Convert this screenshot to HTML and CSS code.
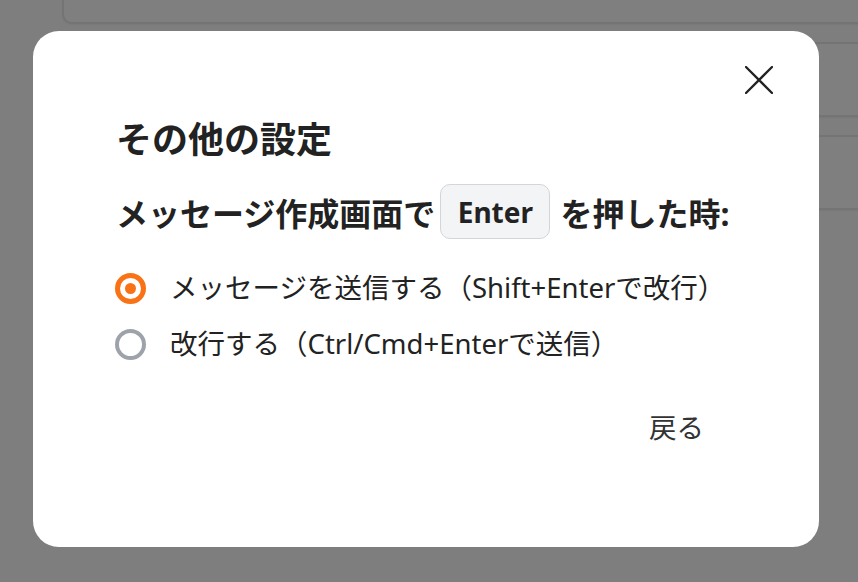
FILE: index.html
```html
<!DOCTYPE html>
<html lang="ja">
<head>
<meta charset="utf-8">
<title>その他の設定</title>
<link rel="stylesheet" href="styles.css">
</head>
<body>
<div class="page">
  <div class="card card-first"><span class="card-text">通知の設定</span></div>
  <div class="card"></div>
  <div class="card"></div>
</div>

<div class="overlay">
  <div class="modal" role="dialog" aria-labelledby="modal-title">
    <div class="modal-header">
      <button class="close-btn" aria-label="閉じる">
        <svg width="28" height="28" viewBox="0 0 28 28" aria-hidden="true">
          <path d="M1 1 L27 27 M27 1 L1 27" stroke="#222" stroke-width="2.3" stroke-linecap="round" fill="none"/>
        </svg>
      </button>
    </div>
    <h2 class="modal-title" id="modal-title">その他の設定</h2>
    <div class="question">
      <span>メッセージ作成画面で</span>
      <kbd class="key">Enter</kbd>
      <span>を押した時:</span>
    </div>
    <div class="options">
      <label class="option">
        <span class="radio radio-checked"><span class="radio-dot"></span></span>
        <span class="option-text">メッセージを送信する（Shift+Enterで改行）</span>
      </label>
      <label class="option">
        <span class="radio"></span>
        <span class="option-text">改行する（Ctrl/Cmd+Enterで送信）</span>
      </label>
    </div>
    <div class="modal-footer">
      <button class="back-btn">戻る</button>
    </div>
  </div>
</div>
</body>
</html>
```

FILE: styles.css
```css
* {
  box-sizing: border-box;
}

html, body {
  margin: 0;
  padding: 0;
  width: 858px;
  height: 582px;
  overflow: hidden;
}

body {
  background: #fdfdfd;
  font-family: "Noto Sans", "Noto Sans CJK JP", sans-serif;
  color: #222;
}

.page {
  display: flex;
  flex-direction: column;
  gap: 18px;
  padding-left: 62px;
  margin-top: -50px;
  width: 1100px;
}

.card {
  height: 75px;
  background: #ffffff;
  border: 2px solid #e8e8e8;
  border-radius: 10px;
  box-shadow: 0 1px 2px rgba(0,0,0,0.06);
}

.card-first {
  height: 74px;
  padding: 0 0 0 36px;
  display: flex;
  align-items: flex-start;
}

.card-text {
  font-size: 24px;
  line-height: 52px;
  color: #222;
}

.overlay {
  position: fixed;
  inset: 0;
  background: rgba(0, 0, 0, 0.5);
  display: flex;
  align-items: flex-start;
  padding: 31px 0 0 33px;
}

.modal {
  width: 786px;
  height: 516px;
  background: #ffffff;
  border-radius: 26px;
  padding: 35px 46px 0 83px;
  display: flex;
  flex-direction: column;
}

.modal-header {
  display: flex;
  justify-content: flex-end;
  height: 28px;
}

.close-btn {
  width: 28px;
  height: 28px;
  padding: 0;
  margin: 0;
  border: none;
  background: none;
  display: flex;
}

.modal-title {
  margin: 24px 0 0 0;
  font-size: 36px;
  line-height: 44px;
  font-weight: 700;
  color: #222;
}

.question {
  margin-top: 22px;
  display: flex;
  align-items: center;
  height: 55px;
  font-size: 32px;
  font-weight: 700;
  color: #222;
}

.key {
  display: inline-flex;
  align-items: center;
  justify-content: center;
  width: 110px;
  height: 55px;
  margin: 0 10px 0 5px;
  background: #f3f4f6;
  border: 1.5px solid #d3d5da;
  border-radius: 10px;
  font-family: "Noto Sans", sans-serif;
  font-size: 28px;
  font-weight: 700;
  color: #222;
}

.options {
  margin-top: 31px;
  display: flex;
  flex-direction: column;
  gap: 20px;
}

.option {
  display: flex;
  align-items: center;
  height: 36px;
  gap: 24px;
}

.radio {
  width: 31px;
  height: 31px;
  border-radius: 50%;
  border: 4px solid #9ea3ab;
  display: flex;
  align-items: center;
  justify-content: center;
  flex-shrink: 0;
  margin-left: -1px;
}

.radio-checked {
  border: 5px solid #f97316;
}

.radio-dot {
  width: 11px;
  height: 11px;
  border-radius: 50%;
  background: #f97316;
}

.option-text {
  font-size: 27.5px;
  line-height: 36px;
  color: #222;
}

.modal-footer {
  margin-top: 40px;
  display: flex;
  justify-content: flex-end;
  padding-right: 53px;
}

.back-btn {
  border: none;
  background: none;
  padding: 8px 16px;
  font-family: "Noto Sans", "Noto Sans CJK JP", sans-serif;
  font-size: 27.5px;
  line-height: 36px;
  color: #333;
}
```
